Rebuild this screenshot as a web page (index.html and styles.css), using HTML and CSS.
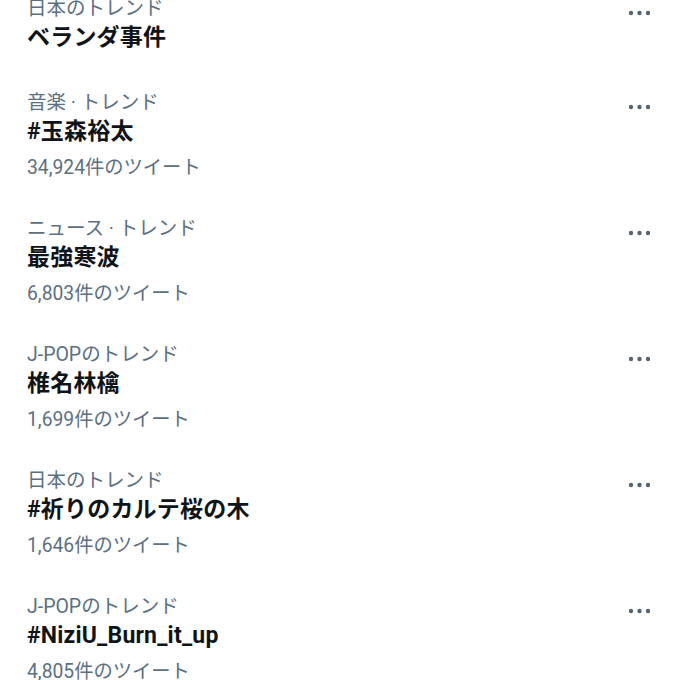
FILE: index.html
```html
<!DOCTYPE html>
<html lang="ja">
<head>
<meta charset="utf-8">
<link rel="stylesheet" href="styles.css">
</head>
<body>
<ul class="trends">
  <li class="trend trend-nocount">
    <div class="info">
      <div class="cat">日本のトレンド</div>
      <div class="title">ベランダ事件</div>
    </div>
    <svg class="more" width="24" height="8" viewBox="0 0 24 8"><circle cx="3" cy="4" r="2.2"/><circle cx="11.5" cy="4" r="2.2"/><circle cx="20" cy="4" r="2.2"/></svg>
  </li>
  <li class="trend">
    <div class="info">
      <div class="cat">音楽 · トレンド</div>
      <div class="title">#玉森裕太</div>
      <div class="count">34,924件のツイート</div>
    </div>
    <svg class="more" width="24" height="8" viewBox="0 0 24 8"><circle cx="3" cy="4" r="2.2"/><circle cx="11.5" cy="4" r="2.2"/><circle cx="20" cy="4" r="2.2"/></svg>
  </li>
  <li class="trend">
    <div class="info">
      <div class="cat">ニュース · トレンド</div>
      <div class="title">最強寒波</div>
      <div class="count">6,803件のツイート</div>
    </div>
    <svg class="more" width="24" height="8" viewBox="0 0 24 8"><circle cx="3" cy="4" r="2.2"/><circle cx="11.5" cy="4" r="2.2"/><circle cx="20" cy="4" r="2.2"/></svg>
  </li>
  <li class="trend">
    <div class="info">
      <div class="cat">J-POPのトレンド</div>
      <div class="title">椎名林檎</div>
      <div class="count">1,699件のツイート</div>
    </div>
    <svg class="more" width="24" height="8" viewBox="0 0 24 8"><circle cx="3" cy="4" r="2.2"/><circle cx="11.5" cy="4" r="2.2"/><circle cx="20" cy="4" r="2.2"/></svg>
  </li>
  <li class="trend">
    <div class="info">
      <div class="cat">日本のトレンド</div>
      <div class="title">#祈りのカルテ桜の木</div>
      <div class="count">1,646件のツイート</div>
    </div>
    <svg class="more" width="24" height="8" viewBox="0 0 24 8"><circle cx="3" cy="4" r="2.2"/><circle cx="11.5" cy="4" r="2.2"/><circle cx="20" cy="4" r="2.2"/></svg>
  </li>
  <li class="trend">
    <div class="info">
      <div class="cat">J-POPのトレンド</div>
      <div class="title">#NiziU_Burn_it_up</div>
      <div class="count">4,805件のツイート</div>
    </div>
    <svg class="more" width="24" height="8" viewBox="0 0 24 8"><circle cx="3" cy="4" r="2.2"/><circle cx="11.5" cy="4" r="2.2"/><circle cx="20" cy="4" r="2.2"/></svg>
  </li>
</ul>
</body>
</html>
```
FILE: styles.css
```css
html, body {
  margin: 0;
  padding: 0;
  background: #ffffff;
  overflow: hidden;
}
body {
  font-family: Roboto, "Noto Sans CJK JP", sans-serif;
  color: #14171a;
}
.trends {
  list-style: none;
  margin: -21px 0 0 0;
  padding: 0;
}
.trend {
  display: flex;
  justify-content: space-between;
  align-items: flex-start;
  padding: 16px 28px 16px 27px;
}
.trend-nocount {
  padding-bottom: 21px;
}
.info {
  display: flex;
  flex-direction: column;
}
.cat {
  font-size: 19.5px;
  line-height: 28px;
  color: #5b7083;
}
.title {
  font-size: 23px;
  line-height: 29px;
  font-weight: 700;
  letter-spacing: 0.2px;
  color: #0f1419;
}
.count {
  font-size: 19.3px;
  line-height: 30px;
  margin-top: 7px;
  color: #5b7083;
}
.more {
  fill: #536471;
  margin-top: 14px;
}
```
